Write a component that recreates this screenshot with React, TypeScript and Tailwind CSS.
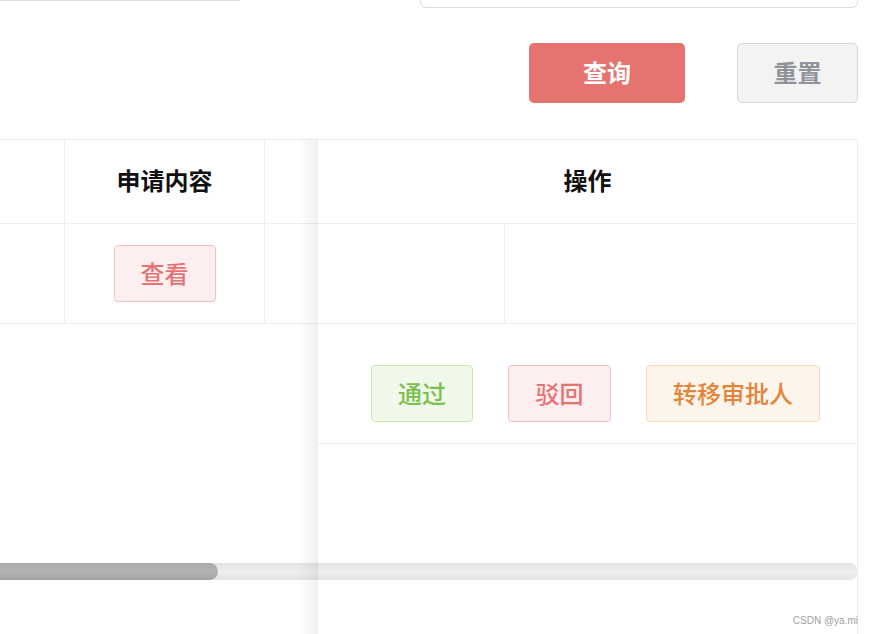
import React from "react";

const font = { fontFamily: '"Noto Sans CJK SC", "Noto Sans", sans-serif' };

function TagBtn({ label, cls }: { label: string; cls: string }) {
  return (
    <div
      className={`flex items-center justify-center h-[57px] pb-[2px] rounded-[4px] border text-[24px] font-medium ${cls}`}
    >
      {label}
    </div>
  );
}

export default function App() {
  return (
    <div className="relative w-[872px] h-[634px] overflow-hidden bg-white" style={font}>
      {/* top form remnants */}
      <div className="flex h-[8px]">
        <div className="w-[240px] h-[1px] bg-[#dcdfe6]" />
        <div className="flex-1" />
        <div className="w-[438px] h-[8px] border border-t-0 border-[#dcdfe6] rounded-b-[6px] mr-[14px]" />
      </div>

      {/* action buttons */}
      <div className="flex justify-end gap-[52px] pr-[14px] mt-[35px]">
        <div className="w-[156px] h-[60px] pb-[3px] rounded-[5px] bg-[#e57471] text-white text-[24px] font-bold flex items-center justify-center">
          查询
        </div>
        <div className="w-[121px] h-[60px] pb-[3px] rounded-[5px] bg-[#f3f3f4] border border-[#d6d7d9] text-[#909399] text-[24px] font-bold flex items-center justify-center">
          重置
        </div>
      </div>

      {/* table area */}
      <div className="relative mt-[36px] h-[495px]">
        <div className="w-[858px] border-t border-[#ebeef5]">
          <div className="flex h-[84px] border-b border-[#ebeef5]">
            <div className="w-[65px] border-r border-[#ebeef5]" />
            <div className="w-[200px] border-r border-[#ebeef5] flex items-center justify-center pb-[3px] text-[24px] font-bold text-[#111]">
              申请内容
            </div>
            <div className="flex-1" />
          </div>
          <div className="flex h-[100px] border-b border-[#ebeef5]">
            <div className="w-[65px] border-r border-[#ebeef5]" />
            <div className="w-[200px] border-r border-[#ebeef5] flex items-center justify-center">
              <div className="w-[102px] h-[57px] pb-[2px] rounded-[4px] border border-[#f6c0c0] bg-[#fdeff0] text-[#e67373] text-[24px] font-medium flex items-center justify-center">
                查看
              </div>
            </div>
            <div className="flex-1" />
          </div>
        </div>

        {/* fixed right column */}
        <div className="absolute left-[318px] top-0 bottom-0 w-[540px] bg-white border-r border-[#ebeef5] z-10">
          <div className="h-[85px] pb-[3px] border-t border-b border-[#ebeef5] flex items-center justify-center text-[24px] font-bold text-[#111]">
            操作
          </div>
          <div className="flex h-[100px] border-b border-[#ebeef5]">
            <div className="w-[187px] border-r border-[#ebeef5]" />
            <div className="flex-1" />
          </div>
          <div className="flex items-start h-[120px] border-b border-[#ebeef5] pl-[53px] pt-[41px] gap-[35px]">
            <div className="w-[102px]">
              <TagBtn label="通过" cls="bg-[#f0f8ea] border-[#c8e8b4] text-[#7cbf4c]" />
            </div>
            <div className="w-[103px]">
              <TagBtn label="驳回" cls="bg-[#fdeff0] border-[#f6c0c0] text-[#e67373]" />
            </div>
            <div className="w-[174px]">
              <TagBtn label="转移审批人" cls="bg-[#fdf5eb] border-[#f5dcb4] text-[#e3843a]" />
            </div>
          </div>
        </div>

        {/* fixed column shadow */}
        <div className="absolute left-[298px] top-0 bottom-0 w-[20px] bg-gradient-to-r from-transparent to-[rgba(0,0,0,0.06)] z-30" />

        {/* horizontal scrollbar */}
        <div className="absolute left-0 top-[424px] w-[858px] h-[17px] rounded-full bg-gradient-to-b from-[#e3e3e3] via-[#efefef] to-[#e3e3e3] z-20">
          <div className="w-[218px] h-[17px] rounded-r-full bg-gradient-to-b from-[#a9a9a9] via-[#b3b3b3] to-[#a3a3a3]" />
        </div>

        {/* watermark */}
        <div
          className="absolute right-[14px] bottom-[8px] text-[10px] text-[#a0a0a0] z-40 leading-none"
          style={{ fontFamily: '"Liberation Sans", Arial, sans-serif' }}
        >
          CSDN @ya.mi
        </div>
      </div>
    </div>
  );
}
